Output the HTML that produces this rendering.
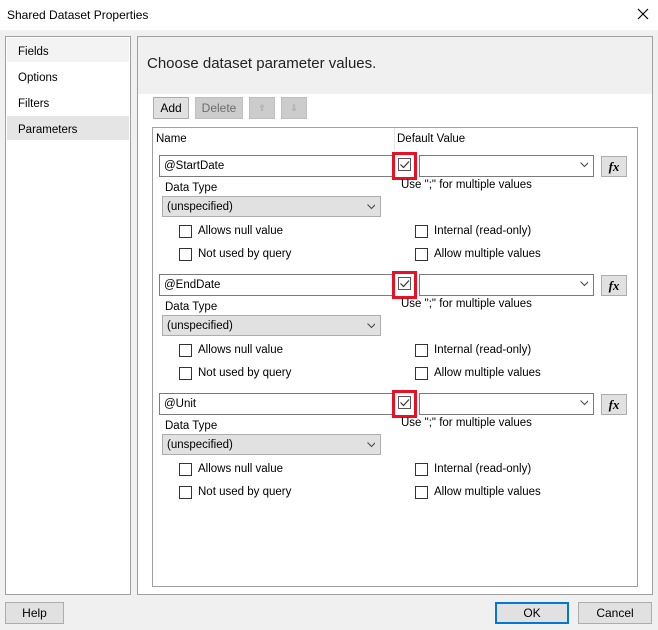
<!DOCTYPE html><html><head><style>
*{box-sizing:border-box;margin:0;padding:0}
body{width:658px;height:630px;background:#f0f0f0;font-family:"Liberation Sans",sans-serif;font-size:11.5px;color:#000;position:relative;overflow:hidden}
.a{position:absolute}
.btn{position:absolute;border:1px solid #adadad;background:#e1e1e1;text-align:center;font-size:12px}
.cb{position:absolute;width:13px;height:13px;border:1px solid #333;background:#fff}
.lbl{position:absolute;font-size:11.5px;white-space:nowrap}
.tb{position:absolute;border:1px solid #7a7a7a;background:#fff;height:22px}
.dd{position:absolute;border:1px solid #adadad;background:#e1e1e1;height:21px}
.chev{position:absolute;right:5px;top:4px;width:8px;height:8px}
</style></head><body>
<div class="a" style="left:0;top:0;width:658px;height:30px;background:#fff"></div>
<div class="lbl" style="left:7px;top:8px;font-size:12px">Shared Dataset Properties</div>
<svg class="a" style="left:637px;top:8px" width="12" height="12"><path d="M1 1L11 11M11 1L1 11" stroke="#000" stroke-width="1.2"/></svg>

<div class="a" style="left:5px;top:36px;width:126px;height:559px;background:#fff;border:1px solid #a0a0a0"></div>
<div class="a" style="left:7px;top:38px;width:122px;height:24px;background:#f3f3f3"></div>
<div class="a" style="left:7px;top:116px;width:122px;height:24px;background:#e5e5e5"></div>
<div class="lbl" style="left:18px;top:46px">Fields</div>
<div class="lbl" style="left:18px;top:72px">Options</div>
<div class="lbl" style="left:18px;top:98px">Filters</div>
<div class="lbl" style="left:18px;top:124px">Parameters</div>

<div class="a" style="left:137px;top:36px;width:516px;height:559px;background:#fff;border:1px solid #a0a0a0"></div>
<div class="a" style="left:138px;top:37px;width:514px;height:57px;background:#f0f0f0"></div>
<div class="lbl" style="left:147px;top:55px;font-size:15px;color:#222">Choose dataset parameter values.</div>

<div class="btn" style="left:153px;top:97px;width:36px;height:22px;line-height:20px">Add</div>
<div class="btn" style="left:195px;top:97px;width:48px;height:22px;line-height:20px;background:#cccccc;border-color:#bfbfbf;color:#6d6d6d">Delete</div>
<div class="btn" style="left:249px;top:97px;width:26px;height:22px;background:#cccccc;border-color:#bfbfbf;color:#999;line-height:20px;font-size:9px">⇧</div>
<div class="btn" style="left:281px;top:97px;width:26px;height:22px;background:#cccccc;border-color:#bfbfbf;color:#999;line-height:20px;font-size:9px">⇩</div>

<div class="a" style="left:152px;top:127px;width:486px;height:460px;background:#fff;border:1px solid #a0a0a0"></div>
<div class="a" style="left:394px;top:128px;width:1px;height:22px;background:#e5e5e5"></div>
<div class="lbl" style="left:156px;top:133px">Name</div>
<div class="lbl" style="left:397px;top:133px">Default Value</div>

<div id="rows"></div>
<script>
var names=["@StartDate","@EndDate","@Unit"],h="";
names.forEach(function(n,i){var y=i*119;
h+='<div class="tb" style="left:159px;top:'+(155+y)+'px;width:234px"><span class="lbl" style="left:4px;top:4px">'+n+'</span></div>';
h+='<div class="a" style="left:392px;top:'+(152+y)+'px;width:25px;height:28px;border:3px solid #e81123"></div>';
h+='<div class="cb" style="left:398px;top:'+(158+y)+'px;border-color:#555"><svg style="position:absolute;left:0;top:0" width="11" height="11"><path d="M1.5 5.5L4.5 8.5L10 2.5" stroke="#333" fill="none" stroke-width="1.2"/></svg></div>';
h+='<div class="tb" style="left:419px;top:'+(155+y)+'px;width:175px"><svg class="chev" style="right:5px;top:6px" width="9" height="6"><path d="M0.5 0.5L4.5 4.5L8.5 0.5" stroke="#444" fill="none"/></svg></div>';
h+='<div class="btn" style="left:601px;top:'+(156+y)+'px;width:26px;height:21px;line-height:19px;font-family:Liberation Serif,serif;font-style:italic;font-weight:bold;font-size:13px">fx</div>';
h+='<div class="lbl" style="left:401px;top:'+(179+y)+'px">Use ";" for multiple values</div>';
h+='<div class="lbl" style="left:165px;top:'+(182+y)+'px">Data Type</div>';
h+='<div class="dd" style="left:162px;top:'+(196+y)+'px;width:219px"><span class="lbl" style="left:4px;top:4px">(unspecified)</span><svg class="chev" style="top:7px" width="9" height="6"><path d="M0.5 0.5L4.5 4.5L8.5 0.5" stroke="#444" fill="none"/></svg></div>';
[[179,225,"Allows null value"],[179,248,"Not used by query"],[415,225,"Internal (read-only)"],[415,248,"Allow multiple values"]].forEach(function(c){
h+='<div class="cb" style="left:'+c[0]+'px;top:'+(c[1]+y)+'px"></div><div class="lbl" style="left:'+(c[0]+19)+'px;top:'+(c[1]+y)+'px">'+c[2]+'</div>';});
});
document.getElementById("rows").innerHTML=h;
</script>

<div class="btn" style="left:5px;top:602px;width:59px;height:22px;line-height:20px">Help</div>
<div class="btn" style="left:495px;top:602px;width:74px;height:22px;line-height:18px;border:2px solid #0078d7">OK</div>
<div class="btn" style="left:578px;top:602px;width:74px;height:22px;line-height:20px">Cancel</div>
</body></html>
